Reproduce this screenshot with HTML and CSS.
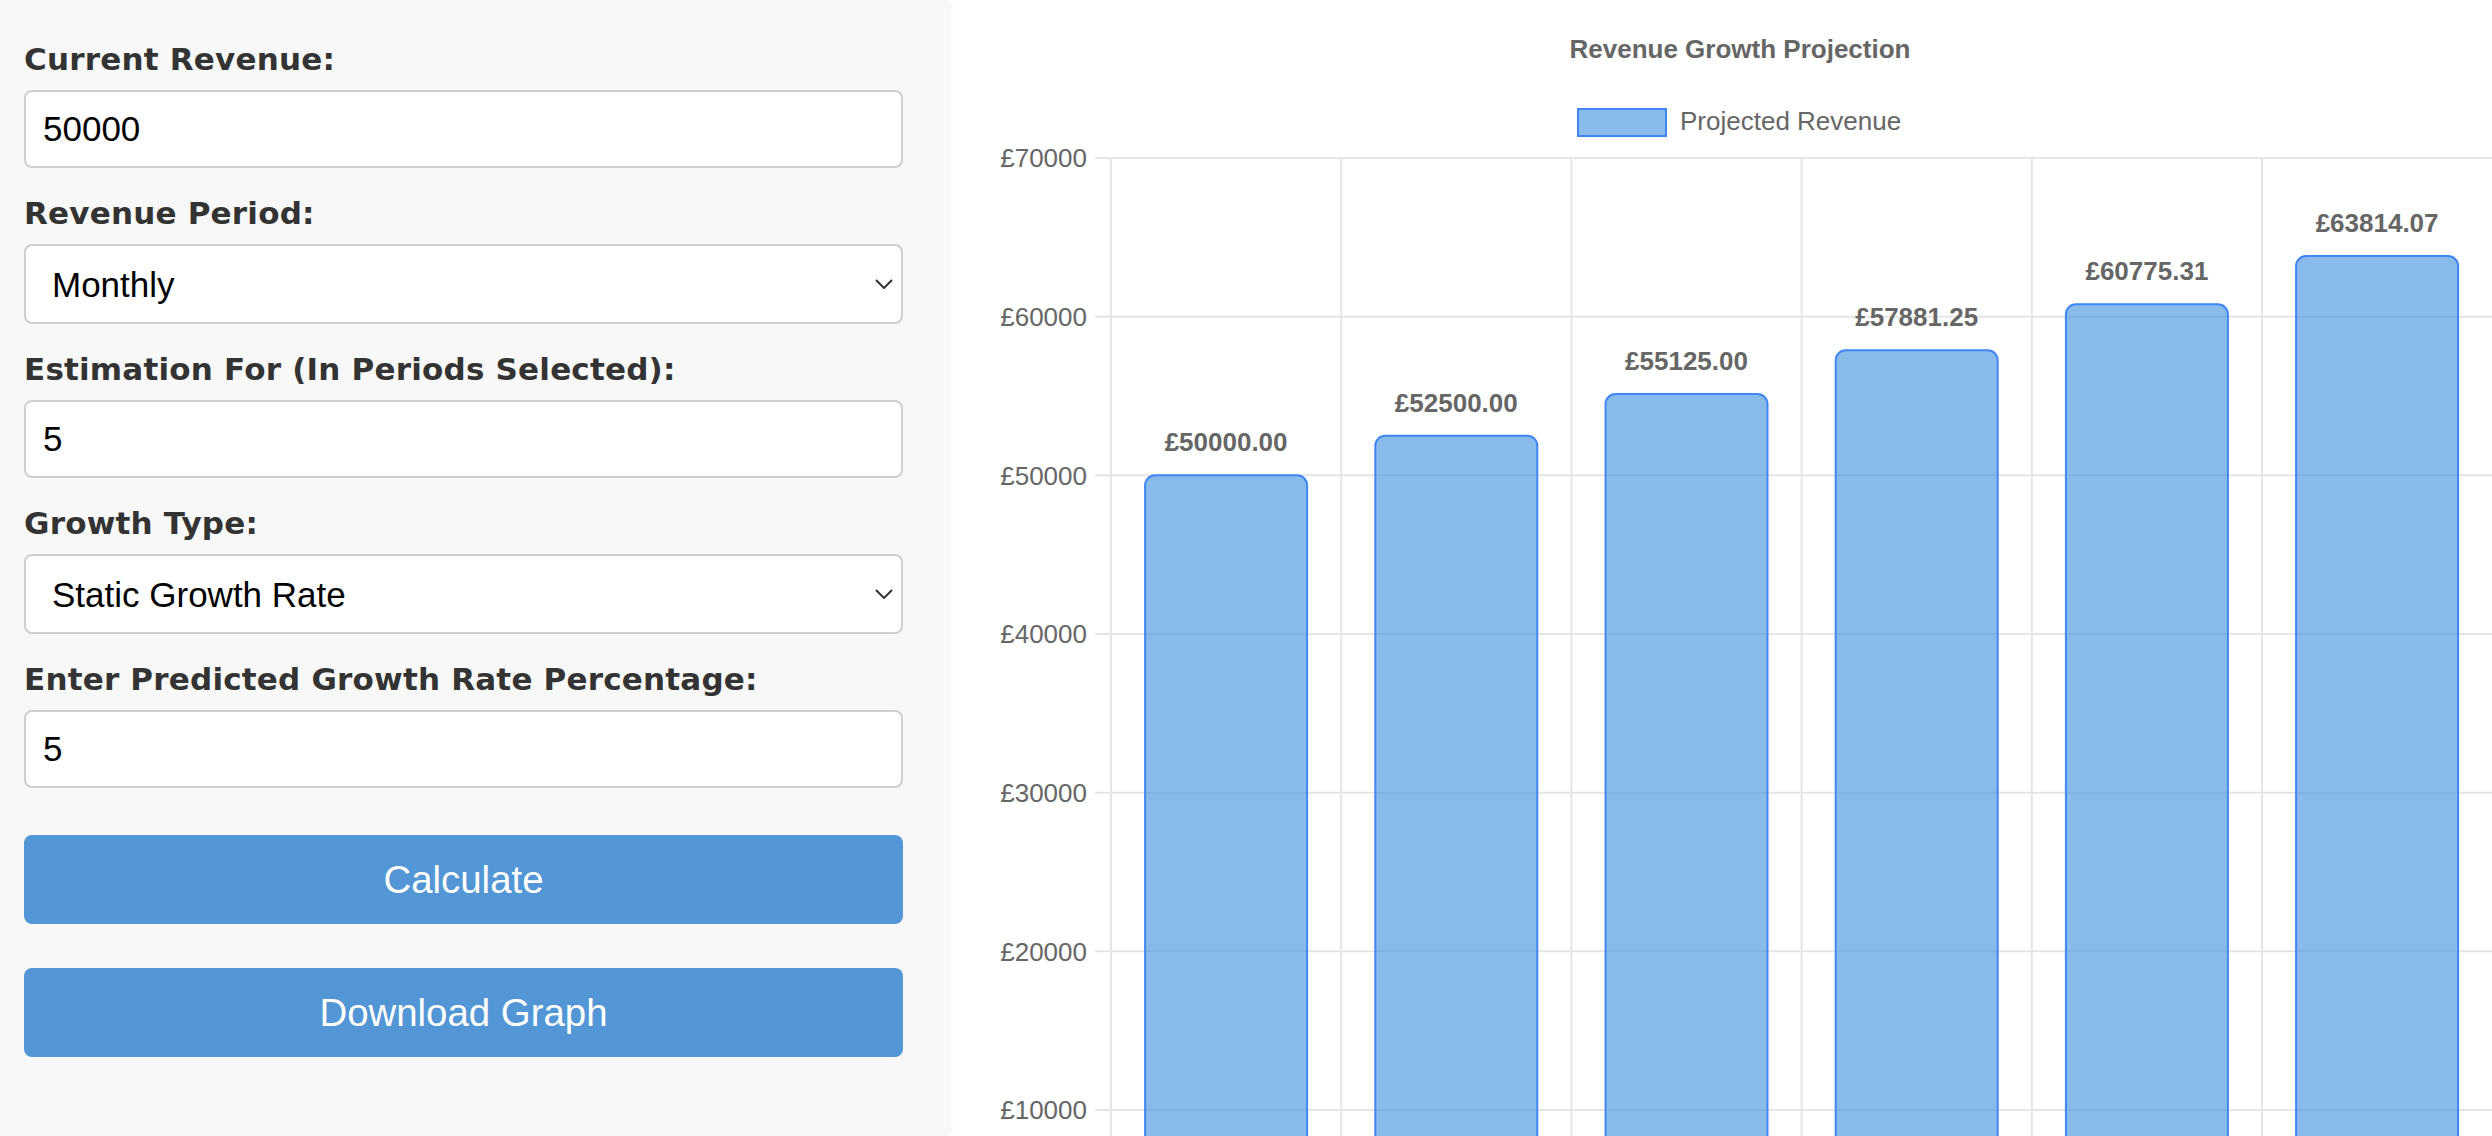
FILE: index.html
```html
<!DOCTYPE html>
<html lang="en">
<head>
<meta charset="utf-8">
<title>Revenue Growth Projection</title>
<link rel="stylesheet" href="styles.css">
</head>
<body>
<div class="app">
  <aside class="panel">
    <form class="form">
      <div class="field">
        <label class="label" for="rev">Current Revenue:</label>
        <input class="control" id="rev" type="text" value="50000">
      </div>
      <div class="field">
        <label class="label" for="period">Revenue Period:</label>
        <div class="select-wrap">
          <select class="control select" id="period"><option>Monthly</option><option>Quarterly</option><option>Yearly</option></select>
          <svg class="chevron" viewBox="0 0 18 10"><path d="M1 1L9 9L17 1" fill="none" stroke="#333" stroke-width="2"/></svg>
        </div>
      </div>
      <div class="field">
        <label class="label" for="periods">Estimation For (In Periods Selected):</label>
        <input class="control" id="periods" type="text" value="5">
      </div>
      <div class="field">
        <label class="label" for="gtype">Growth Type:</label>
        <div class="select-wrap">
          <select class="control select" id="gtype"><option>Static Growth Rate</option><option>Variable Growth Rate</option></select>
          <svg class="chevron" viewBox="0 0 18 10"><path d="M1 1L9 9L17 1" fill="none" stroke="#333" stroke-width="2"/></svg>
        </div>
      </div>
      <div class="field">
        <label class="label" for="rate">Enter Predicted Growth Rate Percentage:</label>
        <input class="control" id="rate" type="text" value="5">
      </div>
      <button type="button" class="btn btn-first">Calculate</button>
      <button type="button" class="btn">Download Graph</button>
    </form>
  </aside>
  <main class="chart-pane">
    <svg class="chart" viewBox="948 0 1544 1136" width="1544" height="1136">
      <text class="title" x="1740" y="58">Revenue Growth Projection</text>
      <rect class="legend-box" x="1578" y="109" width="88" height="27"/>
      <text class="legend-text" x="1680" y="130">Projected Revenue</text>

      <g class="grid">
        <line x1="1095" y1="158" x2="2492" y2="158"/>
        <line x1="1095" y1="316.7" x2="2492" y2="316.7"/>
        <line x1="1095" y1="475.3" x2="2492" y2="475.3"/>
        <line x1="1095" y1="634" x2="2492" y2="634"/>
        <line x1="1095" y1="792.7" x2="2492" y2="792.7"/>
        <line x1="1095" y1="951.3" x2="2492" y2="951.3"/>
        <line x1="1095" y1="1110" x2="2492" y2="1110"/>
        <line x1="1111" y1="158" x2="1111" y2="1136"/>
        <line x1="1341.2" y1="158" x2="1341.2" y2="1136"/>
        <line x1="1571.4" y1="158" x2="1571.4" y2="1136"/>
        <line x1="1801.6" y1="158" x2="1801.6" y2="1136"/>
        <line x1="2031.8" y1="158" x2="2031.8" y2="1136"/>
        <line x1="2262" y1="158" x2="2262" y2="1136"/>
      </g>

      <g class="ticks">
        <text x="1087" y="167">£70000</text>
        <text x="1087" y="326">£60000</text>
        <text x="1087" y="484.5">£50000</text>
        <text x="1087" y="643">£40000</text>
        <text x="1087" y="802">£30000</text>
        <text x="1087" y="960.5">£20000</text>
        <text x="1087" y="1119">£10000</text>
      </g>

      <g class="bars">
        <path d="M1145.1 1140V485.3A10 10 0 0 1 1155.1 475.3H1297.1A10 10 0 0 1 1307.1 485.3V1140"/>
        <path d="M1375.3 1140V445.7A10 10 0 0 1 1385.3 435.7H1527.3A10 10 0 0 1 1537.3 445.7V1140"/>
        <path d="M1605.5 1140V404A10 10 0 0 1 1615.5 394H1757.5A10 10 0 0 1 1767.5 404V1140"/>
        <path d="M1835.7 1140V360.2A10 10 0 0 1 1845.7 350.2H1987.7A10 10 0 0 1 1997.7 360.2V1140"/>
        <path d="M2065.9 1140V314.3A10 10 0 0 1 2075.9 304.3H2217.9A10 10 0 0 1 2227.9 314.3V1140"/>
        <path d="M2296.1 1140V266.1A10 10 0 0 1 2306.1 256.1H2448.1A10 10 0 0 1 2458.1 266.1V1140"/>
      </g>

      <g class="values">
        <text x="1226.1" y="451">£50000.00</text>
        <text x="1456.3" y="411.5">£52500.00</text>
        <text x="1686.5" y="370">£55125.00</text>
        <text x="1916.7" y="326">£57881.25</text>
        <text x="2146.9" y="280">£60775.31</text>
        <text x="2377.1" y="232">£63814.07</text>
      </g>
    </svg>
  </main>
</div>
</body>
</html>
```

FILE: styles.css
```css
* {
  box-sizing: border-box;
}

html,
body {
  margin: 0;
  height: 100%;
  overflow: hidden;
}

body {
  background: #fff;
  font-family: "Liberation Sans", Arial, sans-serif;
}

.app {
  display: flex;
  height: 1136px;
}

.panel {
  width: 948px;
  flex: none;
  background: #f8f8f8;
  padding: 40px 45px 0 24px;
  box-shadow: 2px 0 6px rgba(0, 0, 0, 0.05);
  position: relative;
  z-index: 1;
}

.form {
  display: flex;
  flex-direction: column;
}

.field {
  display: flex;
  flex-direction: column;
  margin-bottom: 26px;
}

.label {
  font-family: "DejaVu Sans", Verdana, sans-serif;
  font-weight: bold;
  font-size: 31px;
  letter-spacing: 0.2px;
  line-height: 38px;
  color: #333;
  margin-bottom: 12px;
}

.control {
  display: block;
  width: 100%;
  height: 78px;
  margin: 0;
  border: 2px solid #cfcfcf;
  border-radius: 8px;
  background: #fff;
  font-family: "Liberation Sans", Arial, sans-serif;
  font-size: 35px;
  color: #000;
  padding: 0 17px;
  outline: none;
}

.select {
  height: 80px;
  appearance: none;
  -webkit-appearance: none;
  padding-left: 26px;
}

.select-wrap {
  position: relative;
}

.chevron {
  position: absolute;
  right: 10px;
  top: 50%;
  width: 18px;
  height: 10px;
  transform: translateY(-50%);
  pointer-events: none;
}

.btn {
  display: block;
  width: 100%;
  height: 89px;
  margin: 44px 0 0;
  border: 0;
  border-radius: 8px;
  background: #5296d5;
  color: #fff;
  font-family: "Liberation Sans", Arial, sans-serif;
  font-size: 38.4px;
  cursor: pointer;
}

.btn-first {
  margin-top: 21px;
}

.chart-pane {
  flex: 1;
  min-width: 0;
  background: #fff;
}

.chart {
  display: block;
  width: 1544px;
  height: 1136px;
  font-family: "Liberation Sans", Arial, sans-serif;
}

.title {
  font-size: 26px;
  font-weight: bold;
  fill: #666;
  text-anchor: middle;
}

.legend-box {
  fill: rgba(74, 150, 222, 0.65);
  stroke: #4285f4;
  stroke-width: 2;
}

.legend-text {
  font-size: 26px;
  fill: #666;
}

.grid line {
  stroke: #e5e5e5;
  stroke-width: 2;
}

.ticks text {
  font-size: 26px;
  fill: #666;
  text-anchor: end;
}

.bars path {
  fill: rgba(74, 150, 222, 0.65);
  stroke: #4285f4;
  stroke-width: 2;
}

.values text {
  font-size: 26px;
  font-weight: bold;
  fill: #666;
  text-anchor: middle;
}
```
